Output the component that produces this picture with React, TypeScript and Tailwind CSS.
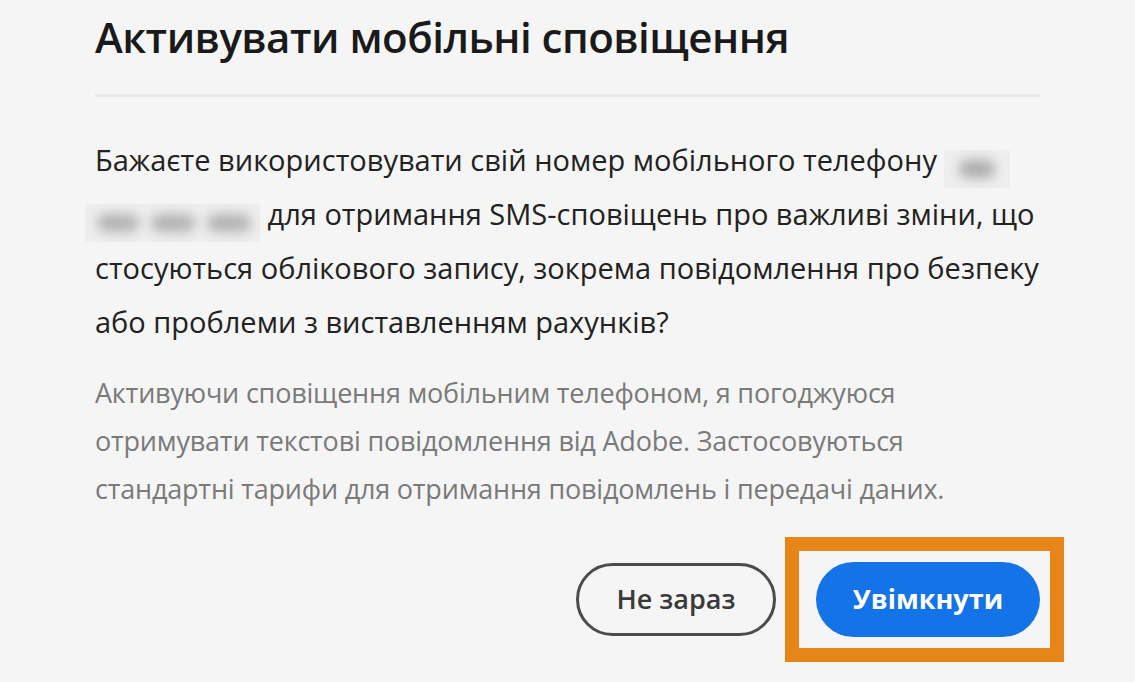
export default function App() {
  return (
    <div className="h-[682px] w-[1135px] overflow-hidden bg-[#f5f5f5] font-['Open_Sans',sans-serif]">
      <div className="ml-[95px] w-[945px]">
        <h1 className="pt-[9px] text-[42px] font-semibold leading-[56px] tracking-[-0.5px] text-[#1a1a1a]">
          Активувати мобільні сповіщення
        </h1>
        <div className="mt-[29px] h-[3px] bg-[#e9e9e9]" />

        <p className="mt-[36px] text-[29px] leading-[54px] text-[#222]">
          Бажаєте використовувати свій номер мобільного телефону{" "}
          <span className="inline-flex h-[38px] w-[66px] translate-y-[7px] items-center justify-center bg-[#eeeeee]">
            <span className="h-[18px] w-[36px] rounded-full bg-[#acacac] blur-[6px]" />
          </span>
          <br />
          <span className="-ml-[10px] inline-flex h-[38px] w-[175px] translate-y-[7px] items-center gap-[12px] bg-[#eeeeee] pl-[12px]">
            <span className="h-[18px] w-[42px] rounded-full bg-[#b3b3b3] blur-[6px]" />
            <span className="h-[18px] w-[44px] rounded-full bg-[#b3b3b3] blur-[6px]" />
            <span className="h-[18px] w-[44px] rounded-full bg-[#b3b3b3] blur-[6px]" />
          </span>{" "}
          для отримання SMS-сповіщень про важливі зміни, що
          <br />
          стосуються облікового запису, зокрема повідомлення про безпеку
          <br />
          або проблеми з виставленням рахунків?
        </p>

        <p className="mt-[20px] text-[27px] leading-[48px] tracking-[-0.2px] text-[#7a7a7a]">
          Активуючи сповіщення мобільним телефоном, я погоджуюся
          <br />
          отримувати текстові повідомлення від Adobe. Застосовуються
          <br />
          стандартні тарифи для отримання повідомлень і передачі даних.
        </p>

        <div className="mt-[24px] flex items-center justify-end gap-[9px]">
          <button className="h-[73px] w-[200px] rounded-full border-[3px] border-[#4b4b4b] text-[27px] font-semibold text-[#3a3a3a]">
            Не зараз
          </button>
          <div className="-mr-[24px] border-[14px] border-[#e68619] py-[11px] pl-[17px] pr-[10px]">
            <button className="h-[75px] w-[224px] rounded-full bg-[#1473e6] text-[27px] font-bold text-white">
              Увімкнути
            </button>
          </div>
        </div>
      </div>
    </div>
  );
}
